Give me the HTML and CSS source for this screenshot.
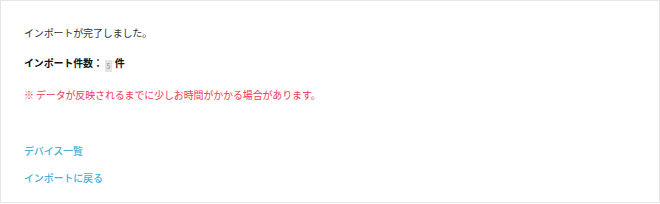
FILE: index.html
```html
<!DOCTYPE html>
<html>
	<head>
		<meta charset="UTF-8">
		<title>インポート完了</title>
		<link rel="stylesheet" href="styles.css">
	</head>
	<body>
		<div class="panel">
			<p class="msg">インポートが完了しました。</p>
			<p class="count">インポート件数：<span class="num">5</span>件</p>
			<p class="note">※ データが反映されるまでに少しお時間がかかる場合があります。</p>
			<ul class="links">
				<li><a href="#">デバイス一覧</a></li>
				<li><a href="#">インポートに戻る</a></li>
			</ul>
		</div>
	</body>
</html>
```

FILE: styles.css
```css
html, body {
	margin: 0;
	padding: 0;
	background-color: #fff;
}
p, ul {
	margin: 0;
	padding: 0;
}
li {
	list-style: none;
}
.panel {
	box-sizing: border-box;
	width: 660px;
	height: 203px;
	border: 1px solid #e6e6e6;
	padding: 25px 23px 0;
	font: 10px/14px "Noto Sans CJK JP", "Noto Sans", sans-serif;
	letter-spacing: -0.15px;
	color: #333;
}
.panel p {
	margin-bottom: 16px;
}
.count {
	font-weight: bold;
	color: #111;
}
.num {
	display: inline-block;
	width: 7px;
	height: 12px;
	margin: 0 3px 0 2px;
	background-color: #e4e4e4;
	color: #aaa;
	font-size: 7px;
	line-height: 12px;
	text-align: center;
	vertical-align: -2px;
}
.note {
	color: #f03a55;
}
.links {
	padding-top: 26px;
}
.links li {
	margin-bottom: 13px;
}
.links a {
	color: #45b1da;
	font-weight: 500;
	text-decoration: none;
}
```
